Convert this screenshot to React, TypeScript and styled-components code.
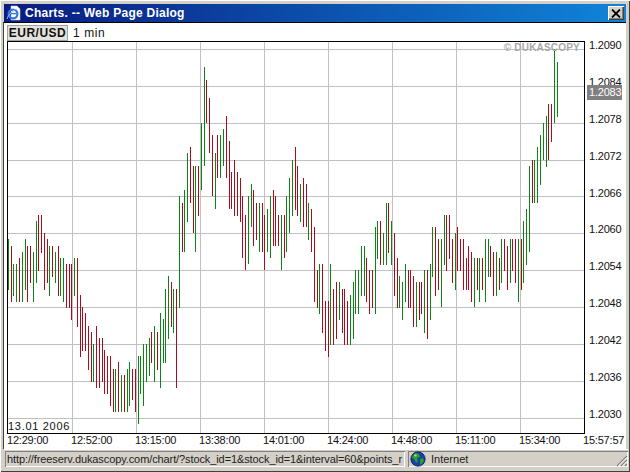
import React from "react";
import styled, { createGlobalStyle } from "styled-components";

const GlobalStyle = createGlobalStyle`
  html, body {
    margin: 0;
    padding: 0;
    background: #d4d0c8;
  }
  * {
    box-sizing: border-box;
  }
`;

// x, colour, high, low -- page coordinates, the svg viewBox below matches them
const BAR_DATA = `8g239-290 11r246-302 13g264-296 16g264-302 19r258-302 22g252-302 25g239-290 27r246-302
30r246-283 33g252-302 36g221-283 38r215-271 41r215-253 44r233-290 47r239-283 49g246-296 52r246-277
55g252-283 58r246-296 60g258-296 63g258-302 66r264-308 69r264-308 71r264-320 74g258-296 77r258-327
80r295-357 82r307-351 85r313-351 88r326-370 91r332-382 93g344-382 96r326-388 99r338-388 102r338-382
104r350-394 107r356-394 110r356-406 113r369-412 115g369-412 118r362-412 121g375-412 124r375-412
127g369-412 129g362-406 132r369-400 135r369-412 138g356-424 140g356-394 143g344-406 146g344-382
149g338-376 151r332-363 154g326-382 157r332-370 160g313-388 163g319-363 165g289-363 168g276-339
171r282-327 173g289-333 176r289-388 179g196-308 182r203-252 184g190-252 187g153-222 190r147-203
193r166-233 195g166-252 198r166-216 201g123-190 204g67-166 206r80-123 209r98-153 212r135-196
215g153-209 217r135-178 220g135-178 223g129-166 226r116-178 229r141-209 231r172-209 234r160-216
237r172-216 240r178-222 242r196-258 245r215-270 248g196-264 251g184-227 253r190-246 256r203-240
259g203-252 262r203-252 264r215-270 267g209-252 270g196-258 273r190-246 275r196-246 278r215-246
281g215-270 284r215-258 286g196-252 289g178-233 292g160-216 295r147-210 297r166-216 300g184-222
303r178-227 306r184-227 308g203-240 311r209-252 314r227-302 317r270-308 319g264-314 322r264-333
325r301-351 328r301-357 330g264-345 333r289-345 336r282-339 339g282-320 342r289-333 344r289-345
347r301-345 350g295-345 353g282-339 355g270-314 358g270-314 361g246-296 364g246-296 366r258-302
369r270-314 372r270-308 375g227-314 377g221-259 380r221-265 383g233-265 386g203-265 388r203-253
391g221-265 394r233-296 397r258-308 399g276-308 402g282-320 405g264-302 408r270-308 410r270-308
413r276-327 416g282-327 419r282-320 421r282-314 424g270-333 427r270-339 430g264-320 432g227-277
435r227-296 438r239-290 441g239-307 444g215-265 446r215-271 449r215-259 452r239-283 455g233-290
457r227-271 460r239-271 463r239-290 466r258-290 468r246-290 471r252-302 474g258-307 477r258-290
479g258-302 482r258-290 485g239-302 488g239-277 490r246-277 493r252-296 496g252-296 499r258-290
501g239-283 504r239-271 507r246-290 510g239-283 512r239-271 515r239-283 518g239-302 521r239-290
523g221-283 526g209-265 529g166-252 532r160-203 534g160-203 537g147-203 540g135-185 543g123-160
546g116-167 548r104-160 551r104-142 554g49-123 557g62-117`;

const bars = BAR_DATA.trim()
  .split(/\s+/)
  .map((item) => {
    const m = item.match(/(\d+)([gr])(\d+)-(\d+)/)!;
    return { x: +m[1], up: m[2] === "g", high: +m[3], low: +m[4] };
  });

const PRICES = ["1.2090", "1.2084", "1.2078", "1.2072", "1.2066", "1.2060", "1.2054", "1.2048", "1.2042", "1.2036", "1.2030"];
const TIMES = ["12:29:00", "12:52:00", "13:15:00", "13:38:00", "14:01:00", "14:24:00", "14:48:00", "15:11:00", "15:34:00", "15:57:57"];
const GRID_X = [72, 136, 200, 264, 328, 392, 456, 520];
const GRID_Y = [49, 86, 123, 160, 196, 233, 270, 307, 344, 381, 418];

const Window = styled.div`
  width: 630px;
  height: 472px;
  display: flex;
  flex-direction: column;
  padding: 4px 4px 0 4px;
  background: #d4d0c8;
  box-shadow: inset 1px 1px 0 #fff, inset -1px -1px 0 #404040;
  font-family: "Liberation Sans", Arial, sans-serif;
  overflow: hidden;
`;

const TitleBar = styled.div`
  height: 18px;
  flex: none;
  display: flex;
  align-items: center;
  padding: 0 2px 0 2px;
  background: linear-gradient(90deg, #0a1a80 0%, #0c55b0 55%, #1084d8 100%);
  color: #fff;
  font-size: 12px;
  font-weight: 700;
`;

const TitleText = styled.span`
  margin-left: 3px;
  flex: 1;
  letter-spacing: 0.25px;
`;

const CloseButton = styled.div`
  width: 16px;
  height: 14px;
  display: flex;
  align-items: center;
  justify-content: center;
  background: #d4d0c8;
  box-shadow: inset 1px 1px 0 #fff, inset -1px -1px 0 #404040, inset -2px -2px 0 #808080;
`;

const Content = styled.div`
  flex: 1;
  display: flex;
  flex-direction: column;
  margin-left: -1px;
  background: #fff;
  border-top: 1px solid #000;
  border-left: 1px solid #404040;
  padding: 2px 0 0 3px;
  min-height: 0;
`;

const Header = styled.div`
  height: 16px;
  flex: none;
  display: flex;
  align-items: center;
  gap: 5px;
  font-size: 12px;
  color: #111;
`;

const PairBox = styled.div`
  width: 61px;
  height: 16px;
  display: flex;
  align-items: center;
  justify-content: center;
  background: #e4e2dc;
  border: 1px solid #a0a0a0;
  font-weight: 700;
  font-size: 12px;
  letter-spacing: 0.5px;
`;

const Interval = styled.span`
  letter-spacing: 0.6px;
`;

const ChartRow = styled.div`
  display: flex;
  height: 393px;
  flex: none;
`;

const Plot = styled.div`
  position: relative;
  width: 578px;
  height: 393px;
  flex: none;
  border: 1px solid #000;
  background: #fff;
`;

const PlotSvg = styled.svg`
  display: block;
  shape-rendering: crispEdges;
`;

const Watermark = styled.div`
  position: absolute;
  top: 0;
  right: 4px;
  font-size: 10px;
  line-height: 12px;
  font-weight: 700;
  letter-spacing: 0.2px;
  color: #a8a8a8;
`;

const DateLabel = styled.div`
  position: absolute;
  left: 0;
  bottom: 0;
  padding-right: 2px;
  font-size: 11px;
  line-height: 13px;
  letter-spacing: 0.7px;
  color: #111;
`;

const PriceAxis = styled.div`
  position: relative;
  flex: 1;
  margin-top: -3px;
  padding-left: 4px;
  font-size: 11px;
  letter-spacing: -0.2px;
  color: #111;
`;

const PriceLabel = styled.div`
  height: 36.9px;
  line-height: 14px;
`;

const LastPrice = styled.div`
  position: absolute;
  left: 2px;
  top: 47px;
  width: 35px;
  height: 15px;
  padding-left: 2px;
  line-height: 15px;
  background: #808080;
  color: #fff;
`;

const TimeAxis = styled.div`
  flex: 1;
  display: grid;
  grid-template-columns: repeat(9, 64px) auto;
  font-size: 11px;
  line-height: 13px;
  color: #111;
  align-items: start;
  letter-spacing: -0.2px;
`;

const StatusBar = styled.div`
  height: 23px;
  flex: none;
  display: flex;
  gap: 3px;
  margin: 0 -2px 0 0;
  padding: 2px 0 5px 1px;
  font-size: 11px;
  color: #222;
  box-shadow: inset 0 1px 0 #fff;
`;

const StatusCell = styled.div<{ $width?: number }>`
  display: flex;
  align-items: center;
  flex: ${(p) => (p.$width ? "none" : "1")};
  width: ${(p) => (p.$width ? `${p.$width}px` : "auto")};
  overflow: hidden;
  white-space: nowrap;
  padding-left: 2px;
  gap: 5px;
  box-shadow: inset 1px 1px 0 #808080, inset -1px -1px 0 #fff;
`;

const UrlText = styled.span`
  letter-spacing: -0.1px;
`;

const Grip = styled.svg`
  margin-left: auto;
  align-self: flex-end;
  flex: none;
`;

function PageIcon() {
  return (
    <svg width="16" height="16" viewBox="0 0 16 16">
      <path d="M5 1h6l3 3v11H5z" fill="#fff" stroke="#c8d0e0" strokeWidth="0.6" />
      <circle cx="7" cy="9" r="4.4" fill="none" stroke="#2f78e0" strokeWidth="2.2" />
      <path d="M3.4 8.6h7" stroke="#2f78e0" strokeWidth="1.4" />
      <path d="M1 14c1-4 6-9 10-10" fill="none" stroke="#9cc4f4" strokeWidth="1" />
    </svg>
  );
}

function CloseIcon() {
  return (
    <svg width="10" height="9" viewBox="0 0 10 9">
      <path d="M1 0.5l8 8M9 0.5l-8 8" stroke="#000" strokeWidth="1.8" />
    </svg>
  );
}

function GlobeIcon() {
  return (
    <svg width="16" height="16" viewBox="0 0 16 16">
      <circle cx="8" cy="8" r="7.2" fill="#1c3ea8" stroke="#0c1c58" strokeWidth="0.8" />
      <path d="M3 4l3-2 3 1 1 3-3 1 1 3-2 2-2-4-2-1z" fill="#28a028" />
      <path d="M10 8l3-1 1 3-3 4-1-2z" fill="#28a028" />
      <circle cx="5.4" cy="4.4" r="1.2" fill="#a8e078" />
    </svg>
  );
}

function GripIcon() {
  return (
    <Grip width="13" height="13" viewBox="0 0 13 13">
      <path d="M12 2L2 12M12 6L6 12M12 10L10 12" stroke="#808080" strokeWidth="1.2" />
      <path d="M12 3.4L3.4 12M12 7.4L7.4 12" stroke="#fff" strokeWidth="1" />
    </Grip>
  );
}

function Chart() {
  return (
    <Plot>
      <PlotSvg width="576" height="391" viewBox="8 42 576 391">
        {GRID_X.map((x) => (
          <rect key={x} x={x} y={42} width={1} height={391} fill="#c0c0c0" />
        ))}
        {GRID_Y.map((y) => (
          <rect key={y} x={8} y={y} width={576} height={1} fill="#c0c0c0" />
        ))}
        {bars.map((b) => (
          <rect
            key={b.x}
            x={b.x}
            y={b.high}
            width={1}
            height={b.low - b.high}
            fill={b.up ? "#0c8414" : "#a80c1c"}
          />
        ))}
      </PlotSvg>
      <Watermark>© DUKASCOPY</Watermark>
      <DateLabel>13.01 2006</DateLabel>
    </Plot>
  );
}

export default function App() {
  return (
    <>
      <GlobalStyle />
      <Window>
        <TitleBar>
          <PageIcon />
          <TitleText>Charts. -- Web Page Dialog</TitleText>
          <CloseButton>
            <CloseIcon />
          </CloseButton>
        </TitleBar>
        <Content>
          <Header>
            <PairBox>EUR/USD</PairBox>
            <Interval>1 min</Interval>
          </Header>
          <ChartRow>
            <Chart />
            <PriceAxis>
              {PRICES.map((p) => (
                <PriceLabel key={p}>{p}</PriceLabel>
              ))}
              <LastPrice>1.2083</LastPrice>
            </PriceAxis>
          </ChartRow>
          <TimeAxis>
            {TIMES.map((t) => (
              <span key={t}>{t}</span>
            ))}
          </TimeAxis>
        </Content>
        <StatusBar>
          <StatusCell $width={400}>
            <UrlText>http://freeserv.dukascopy.com/chart/?stock_id=1&amp;stock_id=1&amp;interval=60&amp;points_r</UrlText>
          </StatusCell>
          <StatusCell>
            <GlobeIcon />
            Internet
            <GripIcon />
          </StatusCell>
        </StatusBar>
      </Window>
    </>
  );
}
